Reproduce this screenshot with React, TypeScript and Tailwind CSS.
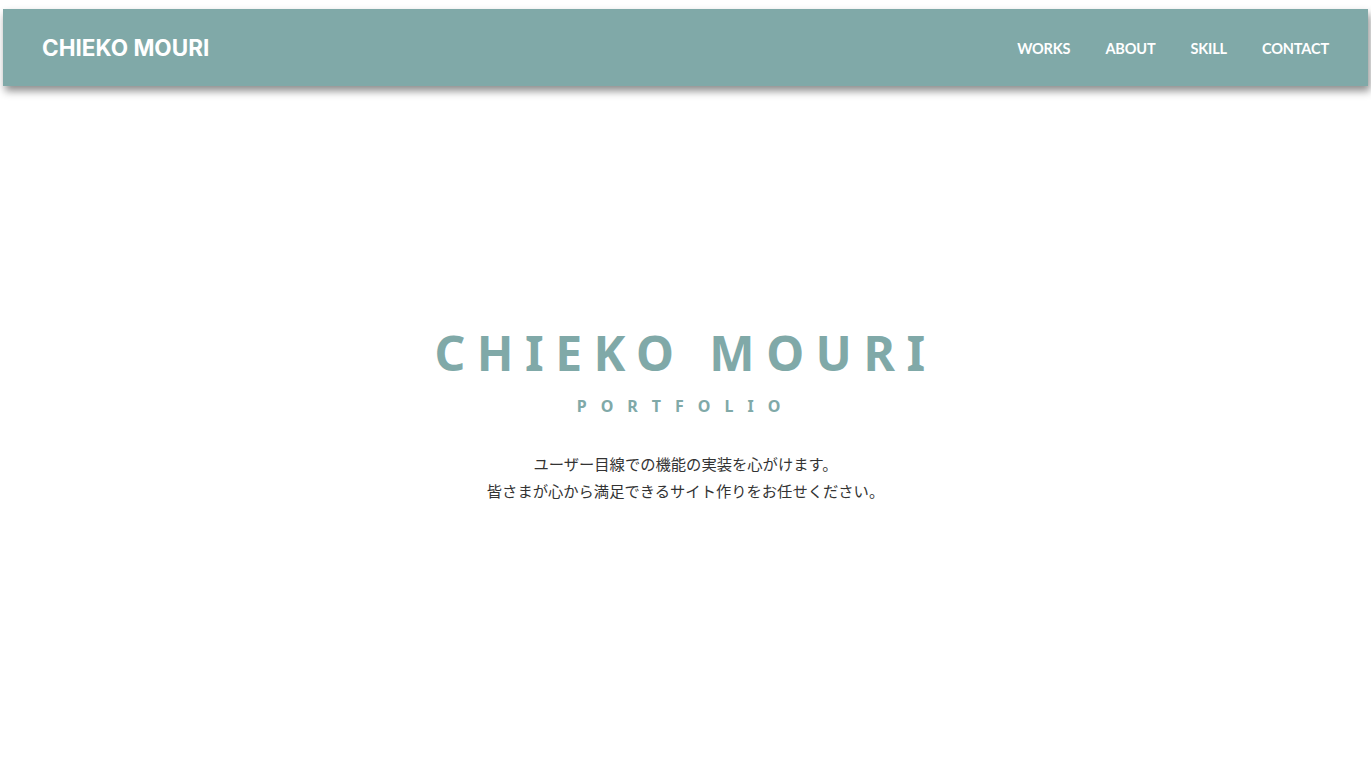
const navItems = ["WORKS", "ABOUT", "SKILL", "CONTACT"];

function Header() {
    return (
        <header className="mx-[3px] mt-[9px] flex h-[77px] items-center justify-between bg-[#80a9a8] px-[39px] shadow-[2px_5px_8px_rgba(0,0,0,0.45)]">
            <h1 className="font-['Inter',sans-serif] text-[22.5px] font-bold text-white">
                CHIEKO MOURI
            </h1>
            <nav className="flex items-center gap-[35px] pt-[3px]">
                {navItems.map((item) => (
                    <a key={item} href="#" className="font-['Lato',sans-serif] text-[14.5px] font-bold tracking-[-0.01em] text-white">
                        {item}
                    </a>
                ))}
            </nav>
        </header>
    );
}

export default function App() {
    return (
        <div className="min-h-[771px] bg-white font-['Noto_Sans','Noto_Sans_CJK_JP',sans-serif]">
            <Header />
            <main className="flex flex-col items-center pt-[243px]">
                <h2 className="text-[48px] font-bold leading-none tracking-[11.5px] text-[#80a9a8]">
                    CHIEKO MOURI
                </h2>
                <p className="mt-[21px] text-[16px] font-bold leading-none tracking-[14px] text-[#80a9a8]">
                    PORTFOLIO
                </p>
                <div className="mt-[36px] text-center font-['Noto_Sans_CJK_JP',sans-serif] text-[15.3px] leading-[27px] text-[#333]">
                    <p>ユーザー目線での機能の実装を心がけます。</p>
                    <p>皆さまが心から満足できるサイト作りをお任せください。</p>
                </div>
            </main>
        </div>
    );
}
